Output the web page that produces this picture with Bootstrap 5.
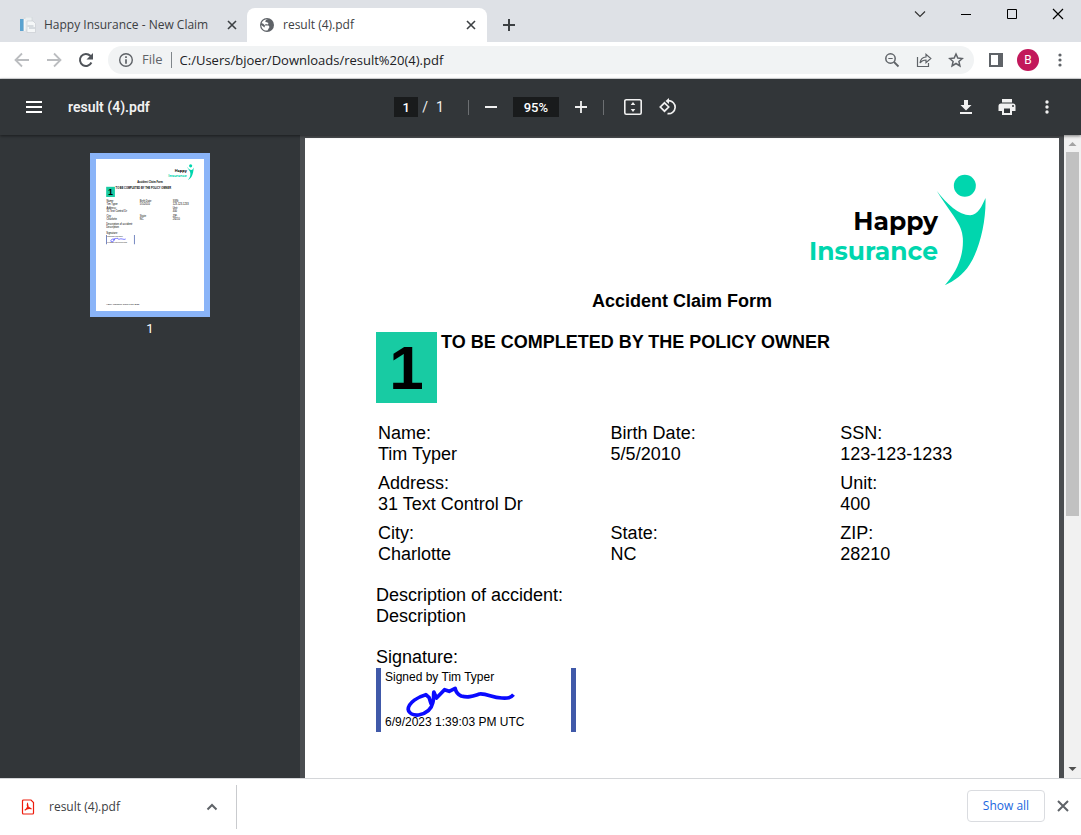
<!DOCTYPE html>
<html lang="en">
<head>
<meta charset="utf-8">
<meta name="viewport" content="width=device-width, initial-scale=1">
<title>result (4).pdf</title>
<link href="https://cdn.jsdelivr.net/npm/bootstrap@5.3.0/dist/css/bootstrap.min.css" rel="stylesheet">
<style>
  body { font-family: "Open Sans", "Noto Sans", sans-serif; font-size: 12px; color: #3c4043; background: #fff; }
  svg { display: block; flex: none; }
  button, .plain-link { background: none; border: 0; padding: 0; color: inherit; text-decoration: none; }
  /* tab strip */
  .tab-strip { background: #dee1e6; height: 42px; }
  .browser-tab { height: 34px; }
  .tab-idle { width: 247px; padding: 0 10px 0 20px; }
  .tab-active { width: 240px; padding: 0 11px 0 12px; background: #fff; border-radius: 8px 8px 0 0; }
  .new-tab { margin-left: 15px; }
  .win-controls { gap: 34px; padding: 8px 17px 0 0; color: #000; }
  /* address row */
  .address-row { height: 37px; border-bottom: 1px solid #dcdde0; padding: 0 14px; color: #5f6368; }
  .omnibox { height: 28px; background: #f1f3f4; border-radius: 14px; padding: 0 10px; margin: 0 15px 0 14px; }
  .omnibox input { border: 0; background: none; outline: 0; color: #202124; font-size: 13px; padding: 0 0 0 8px; border-left: 1px solid #80868b; height: 16px; line-height: 16px; margin-left: 8px; }
  .file-chip { font-size: 13px; margin-left: 8px; }
  .avatar-dot { width: 22px; height: 22px; border-radius: 50%; background: #c2185b; color: #fff; font: 12px Roboto, sans-serif; margin: 0 14px; }
  /* viewer toolbar */
  .pdf-bar { height: 56px; background: #323639; color: #f1f1f1; font-family: Roboto, sans-serif; font-size: 14px; padding: 0 27px 0 26px; box-shadow: 0 1px 3px rgba(0,0,0,.5); z-index: 2; }
  .pdf-bar .side { flex: 1 1 0; }
  .pdf-bar input { background: #191b1c; border: 0; color: #fff; text-align: center; height: 20px; padding: 0; font-size: 13px; font-weight: 500; }
  .doc-name { margin-left: 26px; font-weight: 600; }
  .page-box { width: 24px; }
  .zoom-box { width: 46px; }
  .bar-rule { width: 1px; height: 15px; background: #6c6f72; }
  /* viewer body */
  .viewer { background: #525659; min-height: 0; }
  .thumb-pane { width: 28%; max-width: 300px; background: #323639; padding-top: 18px; color: #fff; font: 13px/24px Roboto, sans-serif; }
  .thumb-frame { border: 6px solid #8ab4f8; background: #fff; width: 120px; }
  .page-pane { padding: 3px 5px 0 5px; background: #4a4d50; }
  .sheet { background: #fff; color: #000; height: 1061px; padding: 34px 71px; font: 18px/21px "Liberation Sans", Arial, sans-serif; }
  .brand-row { height: 115px; font: 700 25px/30px Montserrat, Inter, sans-serif; }
  .brand-name { padding-top: 34px; margin-right: -2px; }
  .brand-teal { color: #00d6ae; }
  .sheet h1, .sheet h2 { font-size: 18px; line-height: 21px; font-weight: 700; margin: 0; }
  .sheet h1 { margin: 4px 0 20px; }
  .step-no { width: 61px; height: 71px; background: #18cba3; font-size: 62px; font-weight: 700; }
  .fields { display: grid; grid-template-columns: 233fr 230fr 148fr; row-gap: 8px; padding-left: 2px; margin: 20px 0; }
  .wide { grid-column: span 2; }
  .sheet dt, .sheet dd { font-weight: 400; margin: 0; }
  .sign-label { margin-top: 20px; }
  .sign-box { width: 200px; height: 64px; border: solid #4059a9; border-width: 0 5px; padding: 0 4px; font-size: 12px; line-height: 19px; }
  .ink { left: 23px; top: 16px; }
  .scroller { width: 17px; background: #f1f1f1; padding: 0 2px; }
  .scroller-thumb { height: 364px; background: #c1c1c1; }
  /* download shelf */
  .shelf { height: 57px; border-top: 1px solid #d4d6d9; }
  .shelf-item { width: 237px; height: 44px; margin-top: 6px; border-right: 1px solid #c9cbce; padding: 0 18px 0 21px; gap: 14px; }
  .shelf-actions { padding: 0 12px 3px 0; }
  .show-all { border: 1px solid #dadce0; border-radius: 4px; width: 78px; height: 32px; color: #1a66e0; margin-right: 12px; }
</style>
</head>
<body class="vh-100 d-flex flex-column overflow-hidden">

<svg width="0" height="0" class="position-absolute" aria-hidden="true">
  <symbol id="figure" viewBox="440 35 155 345">
    <circle cx="526" cy="76" r="33" fill="#00d6ae"/>
    <path fill="#00d6ae" d="M442 92C472 130 508 165 542 165C566 164 577 137 588 113C590 180 572 262 541 312C520 345 494 362 466 375C500 336 523 290 520 234C518 190 488 166 442 92Z"/>
  </symbol>
  <symbol id="signature" viewBox="115 135 335 105">
    <path fill="none" stroke="#0a0aff" stroke-width="11" stroke-linejoin="round" d="M196 196L190 176L180 167C158 173 128 190 127 211C129 224 143 229 158 228C181 224 197 210 201 191C205 179 202 171 204 159L212 177L236 152L250 157L268 148C271 163 277 167 286 171C309 177 322 171 341 165C365 163 377 176 408 177C426 178 435 177 443 167"/>
  </symbol>
</svg>

<header class="flex-shrink-0">
  <div class="tab-strip d-flex align-items-end">
    <div class="browser-tab tab-idle d-flex align-items-center">
      <svg width="16" height="16" viewBox="0 0 16 16"><path d="M5 0h7v13H5z" fill="#eceff1" stroke="#cfd3d7" stroke-width=".6"/><path d="M0 2h3.500v12H0z" fill="#5ba3d0"/><path d="M4 2h1.500v12H4z" fill="#f7f7f7"/><path d="M7 4h6l2.500 2.500V15.500H7z" fill="#f5f7f8" stroke="#c9cdd2" stroke-width=".7"/><path d="M7.500 9h6M9 11h6" stroke="#b8c0c8"/></svg>
      <a href="#" class="plain-link ms-2 flex-grow-1 text-nowrap">Happy Insurance - New Claim</a>
      <button aria-label="Close tab"><svg width="10" height="10" viewBox="0 0 10 10"><path d="M1 1l8 8M9 1L1 9" stroke="#3c4043" stroke-width="1.600"/></svg></button>
    </div>
    <div class="browser-tab tab-active d-flex align-items-center">
      <svg width="16" height="16" viewBox="0 0 16 16"><circle cx="8" cy="8" r="7" fill="#5f6368"/><path d="M9 2.200C6.500 2.800 6 4 6.500 5L9.500 5.500 9 7.500 6.500 7 6 8.500H9.500L10.500 10 8.500 13.500C5 14 2.300 11.500 2.300 8L5.500 10.500 6 8.500 4 6.500 2.600 6.300C3.500 3.500 6 2 9 2.200z" fill="#fff"/><path d="M8.500 5.200l3 .3.500 2.500 1.800.5" fill="none" stroke="#5f6368"/></svg>
      <a href="#" class="plain-link ms-2 flex-grow-1">result (4).pdf</a>
      <button aria-label="Close tab"><svg width="10" height="10" viewBox="0 0 10 10"><path d="M1 1l8 8M9 1L1 9" stroke="#3c4043" stroke-width="1.600"/></svg></button>
    </div>
    <div class="browser-tab new-tab d-flex align-items-center">
      <button aria-label="New tab"><svg width="14" height="14" viewBox="0 0 14 14"><path d="M7 1v12M1 7h12" stroke="#3c4043" stroke-width="2"/></svg></button>
    </div>
    <div class="win-controls d-flex align-self-start ms-auto">
      <button aria-label="Search tabs"><svg width="12" height="12" viewBox="0 0 12 12"><path d="M1 3.500l5 5 5-5" fill="none" stroke="#333" stroke-width="1.200"/></svg></button>
      <button aria-label="Minimize"><svg width="12" height="12" viewBox="0 0 12 12"><path d="M1 6.500h10" stroke="#000"/></svg></button>
      <button aria-label="Maximize"><svg width="12" height="12" viewBox="0 0 12 12"><path d="M1.500 1.500h9v9h-9z" fill="none" stroke="#000"/></svg></button>
      <button aria-label="Close"><svg width="12" height="12" viewBox="0 0 12 12"><path d="M1 1l10 10M11 1L1 11" stroke="#000" stroke-width="1.200"/></svg></button>
    </div>
  </div>

  <div class="address-row d-flex align-items-center">
    <button aria-label="Back"><svg width="16" height="16" viewBox="0 0 16 16"><path d="M15 8H2M8 1.500L1.500 8 8 14.500" fill="none" stroke="#bbbdc0" stroke-width="1.800"/></svg></button>
    <button aria-label="Forward" class="ms-3"><svg width="16" height="16" viewBox="0 0 16 16"><path d="M1 8h13M8 1.500L14.500 8 8 14.500" fill="none" stroke="#bbbdc0" stroke-width="1.800"/></svg></button>
    <button aria-label="Reload" class="ms-3"><svg width="16" height="16" viewBox="0 0 16 16"><path d="M13.400 10.500A6 6 0 1 1 12.300 3.800L13.500 5" fill="none" stroke="#50545a" stroke-width="2"/><path d="M15 1v6.500H8.500z" fill="#50545a"/></svg></button>
    <div class="omnibox d-flex align-items-center flex-grow-1">
      <svg width="16" height="16" viewBox="0 0 16 16"><circle cx="8" cy="8" r="6.300" fill="none" stroke="#5f6368" stroke-width="1.400"/><path d="M8 4.300v1.700M8 7.200v4.500" stroke="#5f6368" stroke-width="1.700"/></svg>
      <label for="url" class="file-chip">File</label>
      <input id="url" type="text" class="flex-grow-1" value="C:/Users/bjoer/Downloads/result%20(4).pdf">
      <div class="d-flex align-items-center gap-3">
        <button aria-label="Zoom"><svg width="16" height="16" viewBox="0 0 16 16"><circle cx="6.500" cy="6.500" r="4.700" fill="none" stroke="#5f6368" stroke-width="1.500"/><path d="M4.300 6.500h4.400" stroke="#5f6368"/><path d="M10 10l4.500 4.500" stroke="#5f6368" stroke-width="1.800"/></svg></button>
        <button aria-label="Share"><svg width="16" height="16" viewBox="0 0 16 16"><path d="M1.500 5v9.500h11V11" fill="none" stroke="#5f6368" stroke-width="1.200"/><path d="M4 11C4.500 7.500 6.500 5.300 10 5V2.300L14.800 6.500 10 10.700V8C7.500 8 5.500 9 4 11z" fill="none" stroke="#5f6368" stroke-width="1.200"/></svg></button>
        <button aria-label="Bookmark"><svg width="16" height="16" viewBox="0 0 16 16"><path d="M8 2l1.800 4.100 4.500.4-3.400 3 1 4.400L8 11.500l-3.900 2.400 1-4.400-3.400-3 4.500-.4z" fill="none" stroke="#5f6368" stroke-width="1.500"/></svg></button>
      </div>
    </div>
    <button aria-label="Side panel"><svg width="14" height="14" viewBox="0 0 14 14"><path d="M0 0h14v14H0z" fill="#5f6368"/><path d="M2 2h7v10H2z" fill="#fff"/></svg></button>
    <button aria-label="Profile" class="avatar-dot d-flex align-items-center justify-content-center">B</button>
    <button aria-label="Menu"><svg width="14" height="16" viewBox="0 0 14 16" fill="#5f6368"><circle cx="7" cy="3" r="1.600"/><circle cx="7" cy="8" r="1.600"/><circle cx="7" cy="13" r="1.600"/></svg></button>
  </div>
</header>

<div class="pdf-bar d-flex align-items-center flex-shrink-0 position-relative">
  <div class="side d-flex align-items-center">
    <button aria-label="Toggle sidebar"><svg width="16" height="12" viewBox="0 0 16 12"><path d="M0 1h16M0 6h16M0 11h16" stroke="#fff" stroke-width="2"/></svg></button>
    <span class="doc-name">result (4).pdf</span>
  </div>
  <div class="d-flex align-items-center pe-2">
    <input class="page-box" aria-label="Page" value="1">
    <span class="mx-1">/</span><span class="ms-1">1</span>
    <span class="bar-rule ms-4"></span>
    <button aria-label="Zoom out" class="ms-3"><svg width="12" height="12" viewBox="0 0 12 12"><path d="M0 6h12" stroke="#f1f1f1" stroke-width="2"/></svg></button>
    <input class="zoom-box mx-3" aria-label="Zoom level" value="95%">
    <button aria-label="Zoom in"><svg width="12" height="12" viewBox="0 0 12 12"><path d="M0 6h12M6 0v12" stroke="#f1f1f1" stroke-width="1.800"/></svg></button>
    <span class="bar-rule mx-3"></span>
    <button aria-label="Fit to page" class="ms-1"><svg width="18" height="16" viewBox="0 0 18 16"><rect x=".8" y=".8" width="16.400" height="14.400" rx="1.500" fill="none" stroke="#f1f1f1" stroke-width="1.600"/><path d="M9 3l2.300 3H6.700zM9 13l2.300-3H6.700z" fill="#f1f1f1"/></svg></button>
    <button aria-label="Rotate" class="ms-3"><svg width="20" height="18" viewBox="0 0 20 18"><path d="M6.500 4.800l4.200 4.200-4.200 4.200L2.300 9z" fill="none" stroke="#f1f1f1" stroke-width="1.700"/><path d="M10.500 2.700a6.500 6.500 0 1 1-1 12.900" fill="none" stroke="#f1f1f1" stroke-width="1.700"/><path d="M11 0v6L7.500 3z" fill="#f1f1f1"/></svg></button>
  </div>
  <div class="side d-flex align-items-center justify-content-end">
    <button aria-label="Download" class="me-4"><svg width="16" height="16" viewBox="0 0 16 16" fill="#f1f1f1"><path d="M6 1h4v5h3.500L8 11.500 2.500 6H6zM2 13h12v2H2z"/></svg></button>
    <button aria-label="Print" class="me-4"><svg width="18" height="16" viewBox="0 0 18 16"><path d="M4 0h10v3.500H4zM3 4.500h12a2.500 2.500 0 0 1 2.500 2.500v5H14v4H4v-4H.5V7A2.500 2.500 0 0 1 3 4.500z" fill="#f1f1f1"/><path d="M6 9.500h6v4.500H6z" fill="#323639"/><circle cx="15" cy="7" r="1" fill="#323639"/></svg></button>
    <button aria-label="More"><svg width="14" height="16" viewBox="0 0 14 16" fill="#f1f1f1"><circle cx="7" cy="3" r="1.700"/><circle cx="7" cy="8" r="1.700"/><circle cx="7" cy="13" r="1.700"/></svg></button>
  </div>
</div>

<main class="viewer d-flex flex-grow-1 overflow-hidden">
  <nav class="thumb-pane flex-shrink-0 w-100 d-flex flex-column align-items-center">
    <a href="#page" class="thumb-frame" aria-label="Page 1">
      <svg width="108" height="152" viewBox="0 0 754 1061" font-family="Liberation Sans, Arial, sans-serif" font-size="18">
        <use href="#figure" x="632" y="34" width="52" height="115"/>
        <g font-family="Montserrat, Inter, sans-serif" font-weight="700" font-size="25" text-anchor="end"><text x="634" y="93">Happy</text><text x="634" y="123" fill="#00d6ae">Insurance</text></g>
        <g font-weight="700"><text x="377" y="170" text-anchor="middle">Accident Claim Form</text><text x="137" y="212">TO BE COMPLETED BY THE POLICY OWNER</text></g>
        <path d="M71 194h61v71H71z" fill="#18cba3"/><text x="84" y="251" font-size="62" font-weight="700">1</text>
        <text x="73" y="302">Name:</text><text x="73" y="323">Tim Typer</text><text x="306" y="302">Birth Date:</text><text x="306" y="323">5/5/2010</text><text x="536" y="302">SSN:</text><text x="536" y="323">123-123-1233</text>
        <text x="73" y="352">Address:</text><text x="73" y="373">31 Text Control Dr</text><text x="536" y="352">Unit:</text><text x="536" y="373">400</text>
        <text x="73" y="403">City:</text><text x="73" y="424">Charlotte</text><text x="306" y="403">State:</text><text x="306" y="424">NC</text><text x="536" y="403">ZIP:</text><text x="536" y="424">28210</text>
        <text x="71" y="464">Description of accident:</text><text x="71" y="485">Description</text><text x="71" y="526">Signature:</text>
        <path d="M70 531h5v64h-5zM265 531h5v64h-5z" fill="#4059a9"/>
        <g font-size="12"><text x="79" y="544">Signed by Tim Typer</text><text x="79" y="589">6/9/2023 1:39:03 PM UTC</text></g>
        <use href="#signature" x="98" y="547" width="112" height="35"/>
        <text x="71" y="1018" font-size="15">Happy Insurance Claim Form 2023</text>
      </svg>
    </a>
    <span>1</span>
  </nav>

  <div class="page-pane flex-grow-1">
    <article class="sheet" id="page">
      <div class="brand-row d-flex justify-content-end">
        <div class="brand-name text-end">Happy<br><span class="brand-teal">Insurance</span></div>
        <svg width="52" height="115"><use href="#figure"/></svg>
      </div>
      <h1 class="text-center">Accident Claim Form</h1>
      <div class="d-flex">
        <div class="step-no d-flex align-items-center justify-content-center">1</div>
        <h2 class="ms-1 mt-0">TO BE COMPLETED BY THE POLICY OWNER</h2>
      </div>
      <dl class="fields">
        <div><dt>Name:</dt><dd>Tim Typer</dd></div>
        <div><dt>Birth Date:</dt><dd>5/5/2010</dd></div>
        <div><dt>SSN:</dt><dd>123-123-1233</dd></div>
        <div class="wide"><dt>Address:</dt><dd>31 Text Control Dr</dd></div>
        <div><dt>Unit:</dt><dd>400</dd></div>
        <div><dt>City:</dt><dd>Charlotte</dd></div>
        <div><dt>State:</dt><dd>NC</dd></div>
        <div><dt>ZIP:</dt><dd>28210</dd></div>
      </dl>
      <dl class="mb-0"><dt>Description of accident:</dt><dd>Description</dd></dl>
      <div class="sign-label">Signature:</div>
      <div class="sign-box d-flex flex-column justify-content-between position-relative">
        <span>Signed by Tim Typer</span>
        <svg class="ink position-absolute" width="112" height="35"><use href="#signature"/></svg>
        <span>6/9/2023 1:39:03 PM UTC</span>
      </div>
    </article>
  </div>

  <div class="scroller d-flex flex-column flex-shrink-0">
    <svg width="13" height="17" viewBox="0 0 13 17"><path d="M2.500 11l4-4 4 4z" fill="#a3a3a3"/></svg>
    <div class="scroller-thumb"></div>
    <svg class="mt-auto" width="13" height="17" viewBox="0 0 13 17"><path d="M2.500 6l4 4 4-4z" fill="#505050"/></svg>
  </div>
</main>

<footer class="shelf d-flex flex-shrink-0">
  <div class="shelf-item d-flex align-items-center">
    <svg width="14" height="16" viewBox="0 0 14 16" fill="none" stroke="#ee1c0c"><path d="M2.500 1h7.500l2.500 2.500v10.500a1 1 0 0 1-1 1h-9a1 1 0 0 1-1-1V2a1 1 0 0 1 1-1z" stroke-width="1.200"/><path d="M3.800 11.200C6 10.500 7.500 7 6.500 4.800 5.500 7 8 9.500 10.500 9.800 8 9 5.500 9.500 3.800 11.200z" stroke-width="1.200"/></svg>
    <a href="#" class="plain-link flex-grow-1">result (4).pdf</a>
    <button aria-label="Options"><svg width="12" height="12" viewBox="0 0 12 12"><path d="M1.500 8.500L6 4l4.500 4.500" fill="none" stroke="#5f6368" stroke-width="2"/></svg></button>
  </div>
  <div class="shelf-actions d-flex align-items-center ms-auto">
    <button class="show-all">Show all</button>
    <button aria-label="Close downloads bar"><svg width="12" height="12" viewBox="0 0 12 12"><path d="M1 1l10 10M11 1L1 11" stroke="#5f6368" stroke-width="2"/></svg></button>
  </div>
</footer>

<script src="https://cdn.jsdelivr.net/npm/bootstrap@5.3.0/dist/js/bootstrap.bundle.min.js"></script>
</body>
</html>
